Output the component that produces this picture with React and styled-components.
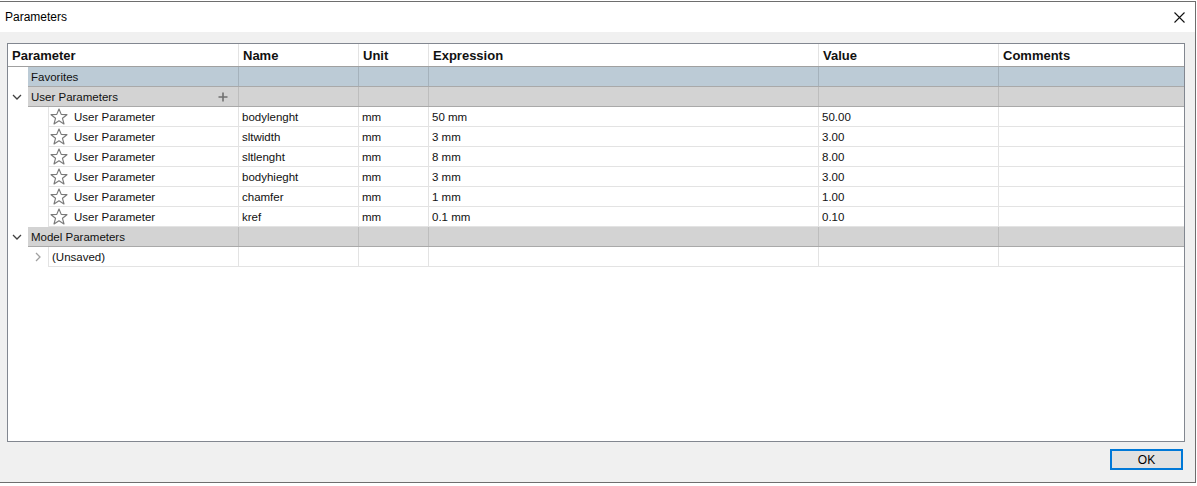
import React from 'react';
import styled, {createGlobalStyle} from 'styled-components';

const GlobalStyle = createGlobalStyle`
    html, body {
        margin: 0;
        padding: 0;
        background: #ffffff;
        font-family: "Liberation Sans", Arial, sans-serif;
    }
`;

const COLS = [231, 120, 70, 390, 180];

const Window = styled.div`
    width: 1195px;
    height: 480px;
    margin-top: 1px;
    border-top: 1px solid #6e6e6e;
    border-right: 1px solid #6e6e6e;
    border-bottom: 1px solid #6e6e6e;
    display: flex;
    flex-direction: column;
    background: #f0f0f0;
`;

const TitleBar = styled.div`
    height: 30px;
    background: #ffffff;
    display: flex;
    align-items: center;
    justify-content: space-between;
    padding: 0 10px 0 5px;
    font-size: 12px;
    color: #000;
`;

const Body = styled.div`
    flex: 1;
    display: flex;
    flex-direction: column;
    padding: 11px 10px 0 7px;
`;

const Panel = styled.div`
    height: 397px;
    border: 1px solid #828790;
    background: #ffffff;
    display: flex;
    flex-direction: column;
`;

const Row = styled.div`
    display: grid;
    grid-template-columns: ${p => COLS[0] - p.$indent - (p.$leftLine ? 1 : 0)}px ${COLS.slice(1).map(c => c + 'px').join(' ')} 1fr;
    margin-left: ${p => p.$indent}px;
    height: ${p => p.$height || 20}px;
    background: ${p => p.$bg || '#ffffff'};
    border-bottom: 1px solid ${p => p.$line || '#e3e3e3'};
    box-sizing: border-box;
    border-left: ${p => p.$leftLine ? '1px solid #e3e3e3' : 'none'};
`;

const Gutter = styled.div`
    position: relative;
    display: flex;
`;

const Cell = styled.div`
    display: flex;
    align-items: center;
    gap: 6px;
    padding-left: ${p => p.$pad ?? 3}px;
    border-right: 1px solid ${p => p.$line || '#e3e3e3'};
    font-size: ${p => p.$head ? '13px' : '11.5px'};
    font-weight: ${p => p.$head ? 'bold' : 'normal'};
    color: #111;
    white-space: nowrap;
    overflow: hidden;
    justify-content: ${p => p.$spread ? 'space-between' : 'flex-start'};
    padding-right: ${p => p.$spread ? '10px' : '0'};
    &:last-child {
        border-right: none;
    }
`;

const Toggle = styled.div`
    position: absolute;
    left: ${p => p.$left}px;
    top: 0;
    height: 20px;
    display: flex;
    align-items: center;
`;

const Footer = styled.div`
    display: flex;
    justify-content: flex-end;
    padding: 7px 2px 0 0;
`;

const OkButton = styled.button`
    width: 73px;
    height: 21px;
    border: 2px solid #0078d7;
    background: #e1e1e1;
    font-family: "Liberation Sans", Arial, sans-serif;
    font-size: 12px;
    color: #000;
    padding: 0;
`;

const Star = () => (
    <svg width="18" height="17" viewBox="0 0 17 16">
        <polygon points="8.5,1 10.6,6 16,6.3 11.8,9.7 13.2,15 8.5,12 3.8,15 5.2,9.7 1,6.3 6.4,6"
                 fill="none" stroke="#7a7a7a" strokeWidth="1.1" strokeLinejoin="round"/>
    </svg>
);

const ChevronDown = () => (
    <svg width="10" height="8" viewBox="0 0 10 8">
        <polyline points="1,2 5,6 9,2" fill="none" stroke="#404040" strokeWidth="1.3"/>
    </svg>
);

const ChevronRight = () => (
    <svg width="8" height="10" viewBox="0 0 8 10">
        <polyline points="2,1 6,5 2,9" fill="none" stroke="#a0a0a0" strokeWidth="1.3"/>
    </svg>
);

const Plus = () => (
    <svg width="10" height="10" viewBox="0 0 10 10">
        <path d="M5 0.5V9.5M0.5 5H9.5" stroke="#707070" strokeWidth="1.6"/>
    </svg>
);

const params = [
    ['bodylenght', 'mm', '50 mm', '50.00'],
    ['sltwidth', 'mm', '3 mm', '3.00'],
    ['sltlenght', 'mm', '8 mm', '8.00'],
    ['bodyhieght', 'mm', '3 mm', '3.00'],
    ['chamfer', 'mm', '1 mm', '1.00'],
    ['kref', 'mm', '0.1 mm', '0.10'],
];

const GroupRow = ({label, bg, line, toggle, plus}) => (
    <Gutter>
        {toggle && <Toggle $left={4}><ChevronDown/></Toggle>}
        <Row $indent={20} $bg={bg} $line="#a9a9a9" style={{flex: 1}}>
            <Cell $line={line} $spread={plus}>
                {label}
                {plus && <Plus/>}
            </Cell>
            <Cell $line={line}/>
            <Cell $line={line}/>
            <Cell $line={line}/>
            <Cell $line={line}/>
            <Cell $line={line}/>
        </Row>
    </Gutter>
);

const App = () => {
    return (
        <>
            <GlobalStyle/>
            <Window>
                <TitleBar>
                    <span>Parameters</span>
                    <svg width="11" height="11" viewBox="0 0 11 11">
                        <path d="M0.5 0.5L10.5 10.5M10.5 0.5L0.5 10.5" stroke="#111" strokeWidth="1.1"/>
                    </svg>
                </TitleBar>
                <Body>
                    <Panel>
                        <Row $indent={0} $height={23} $line="#a0a0a0">
                            <Cell $head $pad={4}>Parameter</Cell>
                            <Cell $head $pad={4}>Name</Cell>
                            <Cell $head $pad={4}>Unit</Cell>
                            <Cell $head $pad={4}>Expression</Cell>
                            <Cell $head $pad={4}>Value</Cell>
                            <Cell $head $pad={4}>Comments</Cell>
                        </Row>
                        <GroupRow label="Favorites" bg="#bccbd6" line="#a5b2bc"/>
                        <GroupRow label="User Parameters" bg="#d3d3d3" line="#bdbdbd" toggle plus/>
                        {params.map(([name, unit, expr, value]) => (
                            <Row key={name} $indent={40} $leftLine>
                                <Cell $pad={1}><Star/>User Parameter</Cell>
                                <Cell>{name}</Cell>
                                <Cell>{unit}</Cell>
                                <Cell>{expr}</Cell>
                                <Cell>{value}</Cell>
                                <Cell/>
                            </Row>
                        ))}
                        <GroupRow label="Model Parameters" bg="#d3d3d3" line="#bdbdbd" toggle/>
                        <Gutter>
                            <Toggle $left={26}><ChevronRight/></Toggle>
                            <Row $indent={40} $leftLine style={{flex: 1}}>
                                <Cell>(Unsaved)</Cell>
                                <Cell/>
                                <Cell/>
                                <Cell/>
                                <Cell/>
                                <Cell/>
                            </Row>
                        </Gutter>
                    </Panel>
                    <Footer>
                        <OkButton>OK</OkButton>
                    </Footer>
                </Body>
            </Window>
        </>
    );
}

export default App;
